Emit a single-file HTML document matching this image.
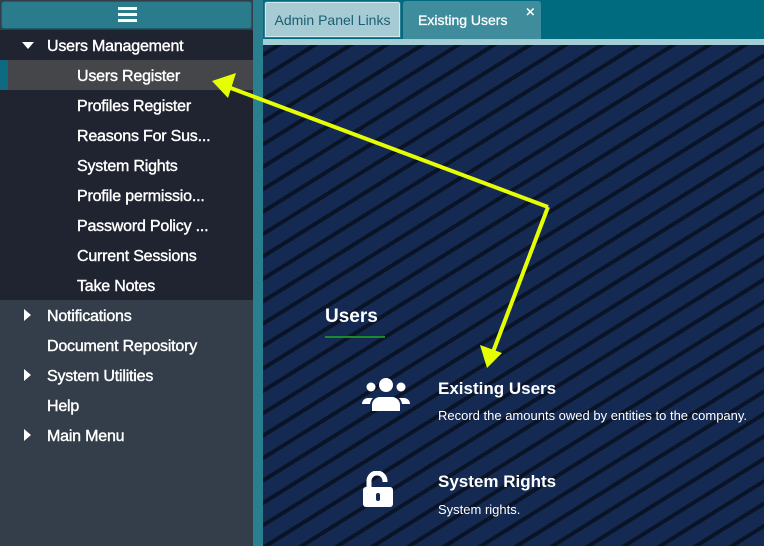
<!DOCTYPE html>
<html><head><style>
*{margin:0;padding:0;box-sizing:border-box}
body{width:764px;height:546px;overflow:hidden;font-family:"Liberation Sans",sans-serif;background:#333f4b;position:relative}
#side{position:absolute;left:0;top:0;width:253px;height:546px;background:#333e4a}
#hb{position:absolute;left:1px;top:1px;width:251px;height:28px;background:#2a7b8c;border:1px solid #1b5d6b;border-radius:3px}
#sub{position:absolute;left:0;top:30px;width:253px;height:270px;background:#1f2430}
.it{position:absolute;color:#fff;font-size:16px;height:30px;line-height:32px;letter-spacing:-0.2px;-webkit-text-stroke:0.4px #fff}
#sel{position:absolute;left:0;top:60px;width:253px;height:30px;background:#444649}
#sel i{position:absolute;left:0;top:0;width:8px;height:30px;background:#0d6a80}
#strip{position:absolute;left:253px;top:0;width:11px;height:546px;background:#2a7f8f}
#tabs{position:absolute;left:263px;top:0;width:501px;height:39px;background:#006a7f}
#line{position:absolute;left:263px;top:39px;width:501px;height:6px;background:#a5cdd6}
#main{position:absolute;left:263px;top:45px;width:501px;height:501px;background:#142a52;
background-image:repeating-linear-gradient(-32deg,#142a52 0 15px,#0a1426 15px 19px);}
.tri{position:absolute;width:0;height:0}
</style></head><body>
<div id="side">
<div id="hb"><div style="position:absolute;left:116px;top:5px;width:19px;height:3px;background:#fff"></div><div style="position:absolute;left:116px;top:11px;width:19px;height:3px;background:#fff"></div><div style="position:absolute;left:116px;top:17px;width:19px;height:3px;background:#fff"></div></div>
<div id="sub"></div>
<div id="sel"><i></i></div>
<div class="tri" style="left:22px;top:42px;border-left:6px solid transparent;border-right:6px solid transparent;border-top:7px solid #fff"></div>
<div class="it" style="left:47px;top:31px">Users Management</div>
<div class="it" style="left:77px;top:61px">Users Register</div>
<div class="it" style="left:77px;top:91px">Profiles Register</div>
<div class="it" style="left:77px;top:121px">Reasons For Sus...</div>
<div class="it" style="left:77px;top:151px">System Rights</div>
<div class="it" style="left:77px;top:181px">Profile permissio...</div>
<div class="it" style="left:77px;top:211px">Password Policy ...</div>
<div class="it" style="left:77px;top:241px">Current Sessions</div>
<div class="it" style="left:77px;top:271px">Take Notes</div>
<div class="tri" style="left:24px;top:309px;border-top:6px solid transparent;border-bottom:6px solid transparent;border-left:7px solid #fff"></div>
<div class="it" style="left:47px;top:301px">Notifications</div>
<div class="it" style="left:47px;top:331px">Document Repository</div>
<div class="tri" style="left:24px;top:369px;border-top:6px solid transparent;border-bottom:6px solid transparent;border-left:7px solid #fff"></div>
<div class="it" style="left:47px;top:361px">System Utilities</div>
<div class="it" style="left:47px;top:391px">Help</div>
<div class="tri" style="left:24px;top:429px;border-top:6px solid transparent;border-bottom:6px solid transparent;border-left:7px solid #fff"></div>
<div class="it" style="left:47px;top:421px">Main Menu</div>
</div>
<div id="strip"></div>
<div id="tabs">
<div style="position:absolute;left:1px;top:1px;width:137px;height:37px;background:#a7cbd4;border:1px solid #2c7e90;box-shadow:inset 0 0 0 1px #d5e8ec;border-radius:3px 3px 0 0;color:#1a5f70;font-size:14px;line-height:37px;text-align:center">Admin Panel Links</div>
<div style="position:absolute;left:140px;top:1px;width:138px;height:38px;background:#3f8d9c;border-radius:3px 3px 0 0;color:#fff;font-size:14px;line-height:38px;padding-left:15px;-webkit-text-stroke:0.3px #fff">Existing Users<span style="position:absolute;right:6px;top:-7px;font-size:16px">×</span></div>
</div>
<div id="line"></div>
<div id="main">
<div style="position:absolute;left:62px;top:261px;color:#fff;font-weight:bold;font-size:19px">Users</div>
<div style="position:absolute;left:62px;top:291px;width:60px;height:2px;background:#1b8a2a"></div>
<svg style="position:absolute;left:98px;top:332px" width="50" height="36" viewBox="0 0 50 36"><circle cx="25" cy="8" r="7" fill="#fff"/><circle cx="10" cy="10" r="4.5" fill="#fff"/><circle cx="40" cy="10" r="4.5" fill="#fff"/><path d="M11 34v-6a8 8 0 0 1 8-8h12a8 8 0 0 1 8 8v6z" fill="#fff"/><path d="M1 27a6 6 0 0 1 6-6h5a10 10 0 0 0-3 6z" fill="#fff"/><path d="M49 27a6 6 0 0 0-6-6h-5a10 10 0 0 1 3 6z" fill="#fff"/></svg>
<div style="position:absolute;left:175px;top:334px;color:#fff;font-weight:bold;font-size:17px">Existing Users</div>
<div style="position:absolute;left:175px;top:363px;color:#fff;font-size:13px">Record the amounts owed by entities to the company.</div>
<svg style="position:absolute;left:98px;top:426px" width="38" height="38" viewBox="0 0 38 38"><path d="M8 16v-6a8 8 0 0 1 16 0v1" fill="none" stroke="#fff" stroke-width="5"/><rect x="2" y="16" width="30" height="20" rx="3" fill="#fff"/><rect x="15" y="22" width="4" height="8" rx="2" fill="#142a52"/></svg>
<div style="position:absolute;left:175px;top:427px;color:#fff;font-weight:bold;font-size:17px">System Rights</div>
<div style="position:absolute;left:175px;top:457px;color:#fff;font-size:13px">System rights.</div>
</div>
<svg style="position:absolute;left:0;top:0" width="764" height="546"><g stroke="#e6ff00" stroke-width="4" fill="#e6ff00"><line x1="548" y1="207" x2="228" y2="87"/><line x1="548" y1="207" x2="493" y2="352"/></g><polygon points="212,81 236,73 228,98" fill="#e6ff00"/><polygon points="487,368 480,345 502,353" fill="#e6ff00"/></svg>
</body></html>
